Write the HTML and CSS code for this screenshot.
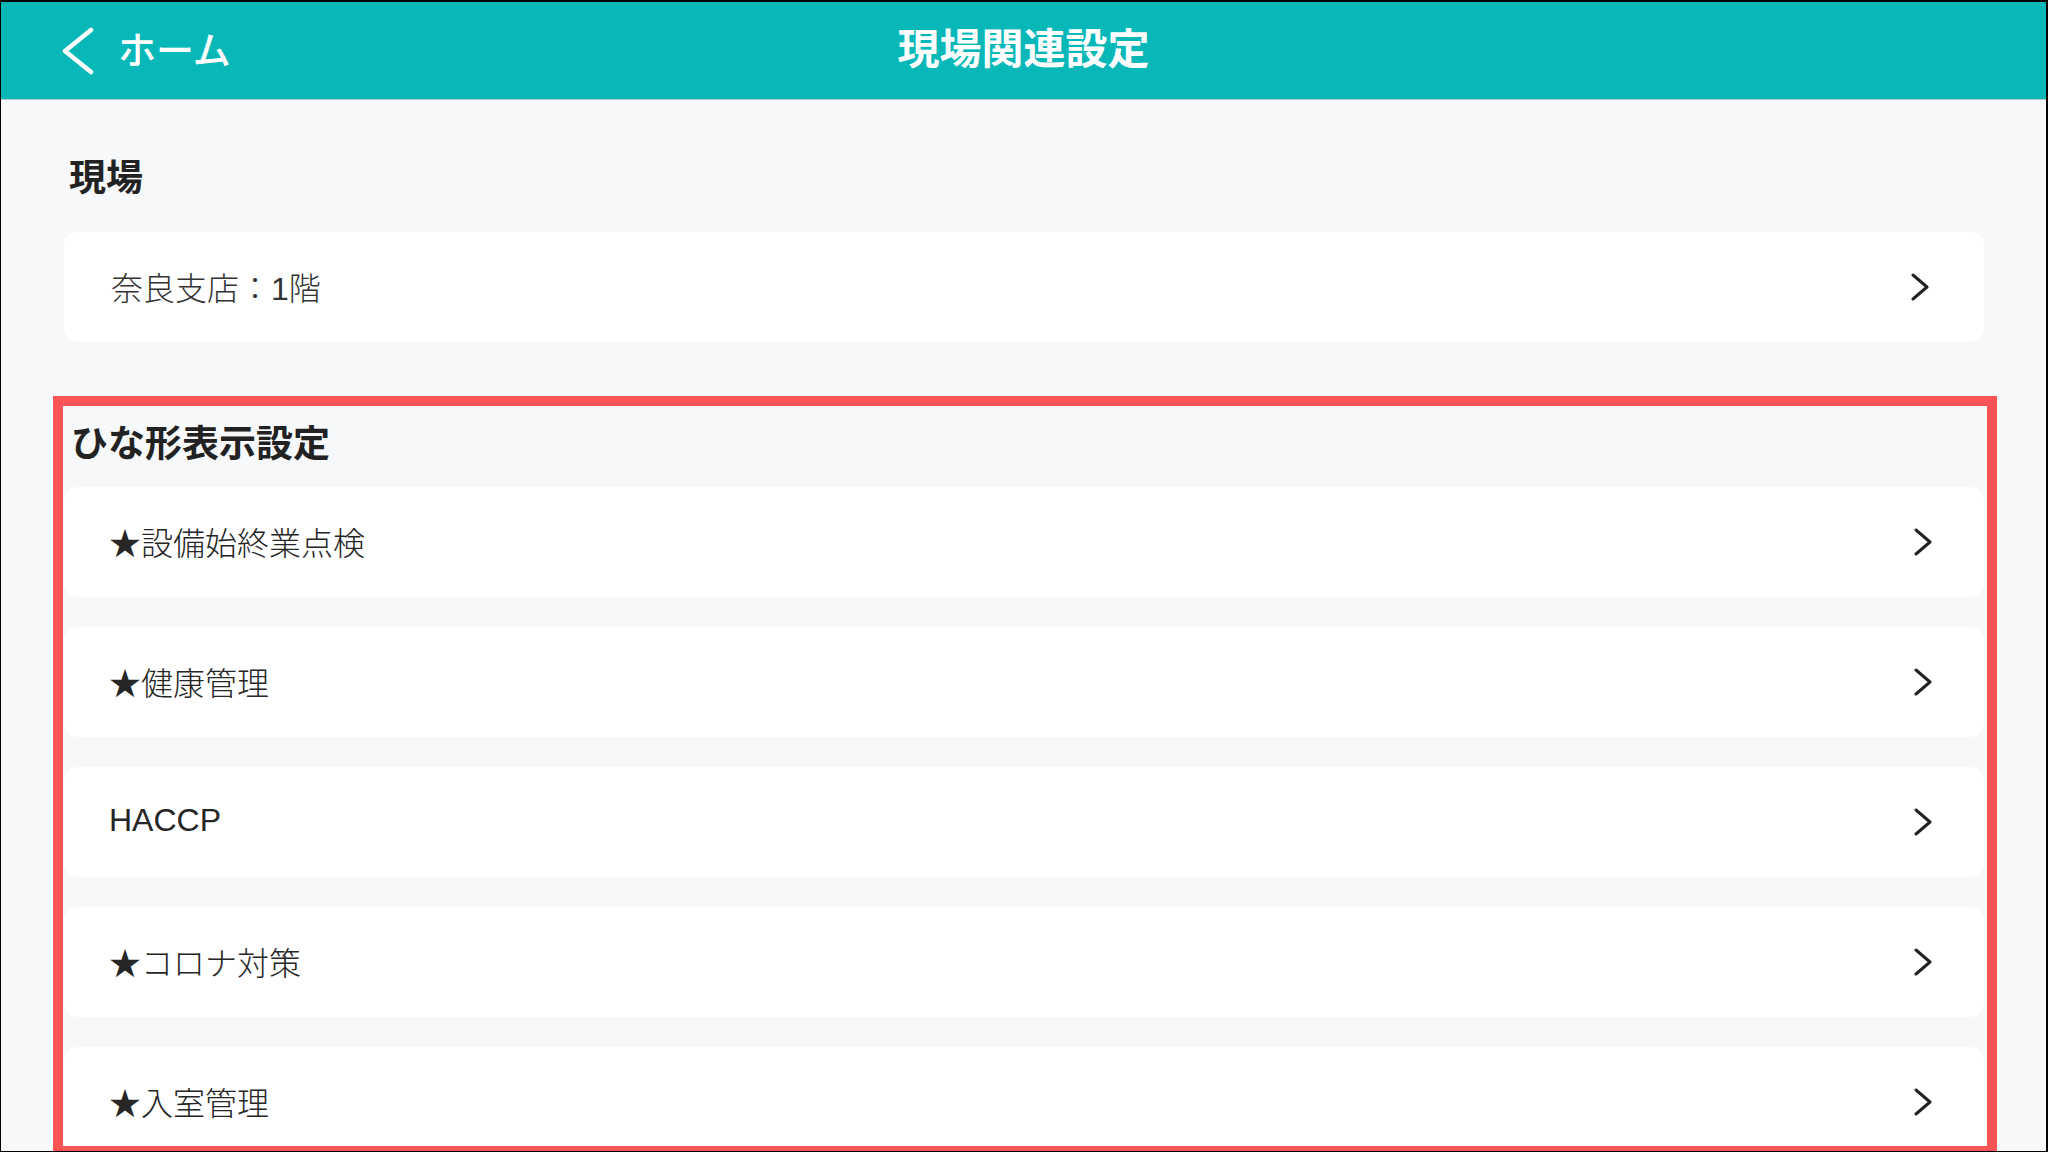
FILE: index.html
```html
<!DOCTYPE html>
<html lang="ja">
<head>
    <meta charset="UTF-8">
    <meta name="viewport" content="width=device-width, initial-scale=1.0">
    <title>現場関連設定</title>
    <link rel="stylesheet" href="styles.css">
</head>
<body>
    <div class="screen">
        <header class="topbar">
            <a class="back" href="#">
                <svg class="back-icon" width="34" height="48" viewBox="0 0 34 48">
                    <polyline points="30,3 4,24 30,45" />
                </svg>
                <span class="back-label">ホーム</span>
            </a>
            <h1 class="title">現場関連設定</h1>
            <div></div>
        </header>

        <main class="content">
            <section class="group group-site">
                <h2 class="group-title">現場</h2>
                <ul class="list">
                    <li class="item item-site">
                        <span>奈良支店：1階</span>
                        <svg class="chevron" width="20" height="28" viewBox="0 0 20 28"><polyline points="3,2 17,14 3,26" /></svg>
                    </li>
                </ul>
            </section>

            <section class="group group-templates">
                <h2 class="group-title">ひな形表示設定</h2>
                <ul class="list">
                    <li class="item">
                        <span>★設備始終業点検</span>
                        <svg class="chevron" width="20" height="28" viewBox="0 0 20 28"><polyline points="3,2 17,14 3,26" /></svg>
                    </li>
                    <li class="item">
                        <span>★健康管理</span>
                        <svg class="chevron" width="20" height="28" viewBox="0 0 20 28"><polyline points="3,2 17,14 3,26" /></svg>
                    </li>
                    <li class="item">
                        <span>HACCP</span>
                        <svg class="chevron" width="20" height="28" viewBox="0 0 20 28"><polyline points="3,2 17,14 3,26" /></svg>
                    </li>
                    <li class="item">
                        <span>★コロナ対策</span>
                        <svg class="chevron" width="20" height="28" viewBox="0 0 20 28"><polyline points="3,2 17,14 3,26" /></svg>
                    </li>
                    <li class="item">
                        <span>★入室管理</span>
                        <svg class="chevron" width="20" height="28" viewBox="0 0 20 28"><polyline points="3,2 17,14 3,26" /></svg>
                    </li>
                </ul>
                <!-- annotation frame drawn over the list -->
                <div class="highlight"></div>
            </section>
        </main>
    </div>
</body>
</html>
```

FILE: styles.css
```css
/* Reset */
* {
    margin: 0;
    padding: 0;
    box-sizing: border-box;
}

body {
    background: #000;
    font-family: "Liberation Sans", "Noto Sans CJK JP", sans-serif;
    color: #2b2b2b;
}

/* Device frame */
.screen {
    position: relative;
    width: 100vw;
    height: 100vh;
    overflow: hidden;
    background: #f7f8fa;
    border-style: solid;
    border-color: #000;
    border-width: 2px 2px 1px 1px;
}

/* Navigation bar */
.topbar {
    display: grid;
    grid-template-columns: 1fr auto 1fr;
    align-items: center;
    height: 98px;
    background: #08b8b8;
    border-bottom: 1px solid #b9cfcf;
    color: #ffffff;
}

.back {
    display: flex;
    align-items: center;
    gap: 23px;
    padding-left: 60px;
    color: #ffffff;
    text-decoration: none;
    font-family: "Noto Sans CJK JP", sans-serif;
    font-size: 38px;
    font-weight: 500;
}

.back-label {
    line-height: 1;
    padding-bottom: 6px;
}

.back-icon polyline {
    fill: none;
    stroke: #ffffff;
    stroke-width: 4.5;
    stroke-linecap: round;
    stroke-linejoin: round;
}

.title {
    font-family: "Noto Sans CJK JP", sans-serif;
    font-size: 42px;
    font-weight: 700;
    line-height: 1;
    padding-bottom: 9px;
}

/* Content */
.content {
    padding: 52px 62px 0 63px;
}

.group-title {
    font-family: "Noto Sans CJK JP", sans-serif;
    font-size: 37px;
    font-weight: 700;
    line-height: 46px;
    color: #222222;
    padding-left: 5px;
}

.group-site .group-title {
    margin-bottom: 34px;
}

.group-templates {
    position: relative;
    margin-top: 76px;
}

.group-templates .group-title {
    margin-bottom: 23px;
    padding-left: 7px;
}

.list {
    list-style: none;
    display: flex;
    flex-direction: column;
    gap: 30px;
}

.item {
    display: flex;
    align-items: center;
    justify-content: space-between;
    height: 110px;
    padding: 0 51px 3px 45px;
    background: #ffffff;
    border-radius: 14px;
    font-size: 32px;
    font-weight: 300;
    color: #262626;
}

.item-site {
    color: #333333;
    padding-right: 54px;
    padding-left: 47px;
}

.chevron {
    margin-top: 3px;
}

.chevron polyline {
    fill: none;
    stroke: #222222;
    stroke-width: 3;
    stroke-linecap: round;
    stroke-linejoin: round;
}

/* Red annotation frame */
.highlight {
    position: absolute;
    top: -22px;
    left: -11px;
    width: 1944px;
    height: 760px;
    border: 10px solid #fb5457;
    pointer-events: none;
}
```
